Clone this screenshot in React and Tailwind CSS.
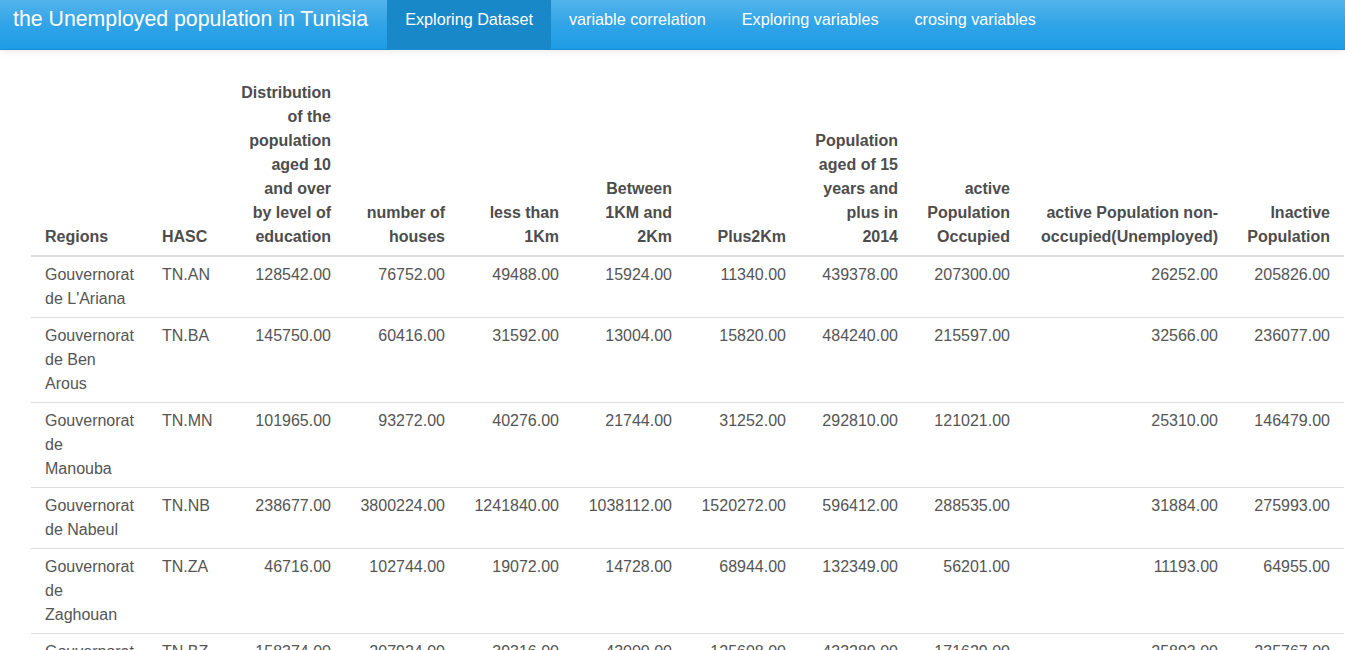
import React from 'react';

// colonnes du tableau : largeur + alignement (label en lignes pour coller au rendu)
const cols = [
  { label: ['Regions'], w: 'w-[117px]', left: true },
  { label: ['HASC'], w: 'w-[77px]', left: true },
  { label: ['Distribution', 'of the', 'population', 'aged 10', 'and over', 'by level of', 'education'], w: 'w-[120px]' },
  { label: ['number of', 'houses'], w: 'w-[114px]' },
  { label: ['less than', '1Km'], w: 'w-[114px]' },
  { label: ['Between', '1KM and', '2Km'], w: 'w-[113px]' },
  { label: ['Plus2Km'], w: 'w-[114px]' },
  { label: ['Population', 'aged of 15', 'years and', 'plus in', '2014'], w: 'w-[112px]' },
  { label: ['active', 'Population', 'Occupied'], w: 'w-[112px]' },
  { label: ['active Population non-', 'occupied(Unemployed)'], w: 'w-[208px]' },
  { label: ['Inactive', 'Population'], w: 'w-[112px]' },
];

const rows = [
  [['Gouvernorat', "de L'Ariana"], 'TN.AN', '128542.00', '76752.00', '49488.00', '15924.00', '11340.00', '439378.00', '207300.00', '26252.00', '205826.00'],
  [['Gouvernorat', 'de Ben', 'Arous'], 'TN.BA', '145750.00', '60416.00', '31592.00', '13004.00', '15820.00', '484240.00', '215597.00', '32566.00', '236077.00'],
  [['Gouvernorat', 'de', 'Manouba'], 'TN.MN', '101965.00', '93272.00', '40276.00', '21744.00', '31252.00', '292810.00', '121021.00', '25310.00', '146479.00'],
  [['Gouvernorat', 'de Nabeul'], 'TN.NB', '238677.00', '3800224.00', '1241840.00', '1038112.00', '1520272.00', '596412.00', '288535.00', '31884.00', '275993.00'],
  [['Gouvernorat', 'de', 'Zaghouan'], 'TN.ZA', '46716.00', '102744.00', '19072.00', '14728.00', '68944.00', '132349.00', '56201.00', '11193.00', '64955.00'],
  [['Gouvernorat', 'de', 'Bizerte'], 'TN.BZ', '158374.00', '207924.00', '39316.00', '43000.00', '125608.00', '433289.00', '171629.00', '25893.00', '235767.00'],
];

const navItems = ['Exploring Dataset', 'variable correlation', 'Exploring variables', 'crosing variables'];

const Lines = ({ lines }) => lines.map((l, i) => <div key={i} className="whitespace-nowrap">{l}</div>);

const App = () => {
  return (
    <div className="min-h-screen bg-white text-[#555555] font-['Liberation_Sans',Arial,sans-serif]">
      {/* --- NAVBAR --- */}
      <nav className="h-[50px] flex items-stretch bg-linear-to-b from-[#52b3eb] via-[#30a4e7] to-[#1d9ce5] border-b border-[#1a8bd0] shadow-[0_2px_8px_rgba(0,0,0,0.08)] text-white">
        <div className="pl-[13px] pr-[19px] pt-[7px] text-[21.3px] leading-[24px] whitespace-nowrap">
          the Unemployed population in Tunisia
        </div>
        {navItems.map((item, i) => (
          <a
            key={item}
            className={`px-[18px] pt-[7px] text-[16.2px] leading-[24px] whitespace-nowrap ${i === 0 ? 'bg-[#1888c9]' : ''}`}
          >
            {item}
          </a>
        ))}
      </nav>

      {/* --- TABLEAU --- */}
      <main className="pt-[25px] pl-[31px]">
        <table className="table-fixed border-collapse w-[1313px] text-[16px] leading-[24px]">
          <thead>
            <tr>
              {cols.map((c, i) => (
                <th
                  key={i}
                  className={`${c.w} align-bottom font-bold text-[#4d4d4d] px-[14px] py-[6px] border-b-2 border-[#dddddd] ${c.left ? 'text-left' : 'text-right'}`}
                >
                  <Lines lines={c.label} />
                </th>
              ))}
            </tr>
          </thead>
          <tbody>
            {rows.map((r, ri) => (
              <tr key={ri} className="border-b border-[#dddddd]">
                {r.map((v, ci) => (
                  <td
                    key={ci}
                    className={`align-top px-[14px] py-[6px] ${ci < 2 ? 'text-left' : 'text-right'}`}
                  >
                    {Array.isArray(v) ? <Lines lines={v} /> : v}
                  </td>
                ))}
              </tr>
            ))}
          </tbody>
        </table>
      </main>
    </div>
  );
};

export default App;
